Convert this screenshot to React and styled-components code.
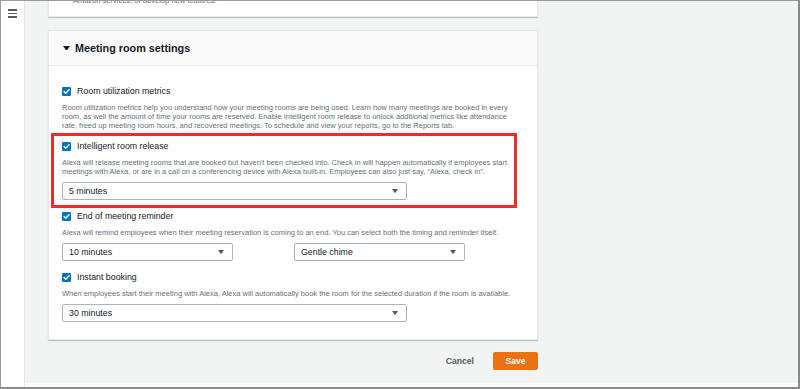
import React from 'react';
import styled, { createGlobalStyle } from 'styled-components';

const GlobalStyle = createGlobalStyle`
  html, body { margin: 0; padding: 0; }
  body {
    font-family: "Liberation Sans", Arial, sans-serif;
    color: #16191f;
    background: #ffffff;
  }
  * { box-sizing: border-box; }
`;

const Frame = styled.div`
  width: 800px;
  height: 389px;
  display: flex;
  background: #ffffff;
  border-top: 1px solid #9a9a9a;
  border-left: 1px solid #9a9a9a;
  border-right: 2px solid #8a8a8a;
  border-bottom: 2px solid #8a8a8a;
  overflow: hidden;
`;

const Sidebar = styled.div`
  width: 24px;
  flex: none;
  background: #ffffff;
  border-right: 1px solid #e4e7e7;
  padding: 8px 0 0 7px;
`;

const Burger = styled.div`
  width: 9px;
  display: flex;
  flex-direction: column;
  gap: 2px;
  span {
    display: block;
    height: 1.5px;
    background: #545b64;
  }
`;

const MainWrap = styled.div`
  flex: 1;
  display: flex;
  flex-direction: column;
`;

const Main = styled.main`
  flex: 1;
  background: #f2f3f3;
  padding: 0 0 0 23px;
  overflow: hidden;
`;

const BottomStrip = styled.div`
  height: 4px;
  background: #fbfbfb;
`;

const Column = styled.div`
  width: 490px;
  display: flex;
  flex-direction: column;
`;

const Card = styled.section`
  background: #ffffff;
  border: 1px solid #e6e9e9;
  box-shadow: 0 1px 1px rgba(0, 28, 36, 0.25);
  border-radius: 0 0 1px 1px;
`;

const TopCard = styled(Card)`
  margin-top: -6px;
  padding: 0 13px 11px 24px;
  font-size: 7.5px;
  line-height: 9px;
  color: #687078;
`;

const SettingsCard = styled(Card)`
  margin-top: 13px;
`;

const Header = styled.header`
  height: 35px;
  background: #fafafa;
  border-bottom: 1px solid #eaeded;
  display: flex;
  align-items: center;
  padding: 0 0 0 14px;
  gap: 5px;
  h2 {
    margin: 0;
    font-size: 10.8px;
    font-weight: 700;
    color: #16191f;
  }
`;

const Body = styled.div`
  padding: 19px 13px 17px 13px;
  display: flex;
  flex-direction: column;
  gap: 10px;
`;

const Setting = styled.div`
  display: flex;
  flex-direction: column;
`;

const Highlight = styled.div`
  border: 3px solid #e8302b;
  margin: -7px 7px -8px -11px;
  padding: 4px 0 5px 8px;
`;

const Row = styled.label`
  height: 12px;
  display: flex;
  align-items: center;
  gap: 6px;
  font-size: 8.8px;
  color: #16191f;
`;

const Desc = styled.p`
  margin: 6px 0 0 0;
  font-size: 7.5px;
  line-height: 9px;
  color: #687078;
  white-space: nowrap;
`;

const Selects = styled.div`
  display: flex;
  gap: 61px;
  margin-top: 6px;
`;

const Select = styled.div`
  width: ${p => p.$w}px;
  height: 18px;
  border: 1px solid #aab7b8;
  border-radius: 2px;
  background: #ffffff;
  display: flex;
  align-items: center;
  justify-content: space-between;
  padding: 0 8px 0 6px;
  font-size: 8.8px;
  color: #16191f;
`;

const Footer = styled.div`
  display: flex;
  justify-content: flex-end;
  align-items: center;
  gap: 10px;
  margin-top: 12px;
`;

const Button = styled.button`
  height: 18px;
  border: none;
  border-radius: 2px;
  font-family: inherit;
  font-size: 8.6px;
  font-weight: 700;
  padding: 0 ${p => (p.$primary ? 11 : 9)}px;
  background: ${p => (p.$primary ? '#ec7211' : 'transparent')};
  color: ${p => (p.$primary ? '#ffffff' : '#545b64')};
  min-width: ${p => (p.$primary ? 45 : 0)}px;
`;

const Check = () => (
  <svg width="9" height="9" viewBox="0 0 9 9">
    <rect x="0" y="0" width="9" height="9" rx="1.2" fill="#0073bb" />
    <path d="M2.1 4.6 L3.8 6.3 L7 2.7" fill="none" stroke="#fff" strokeWidth="1.4" strokeLinecap="round" strokeLinejoin="round" />
  </svg>
);

const Caret = ({ size = 6, color = '#545b64' }) => (
  <svg width={size} height={size * 0.7} viewBox="0 0 10 7">
    <path d="M0 0 L10 0 L5 7 Z" fill={color} />
  </svg>
);

const Dropdown = ({ w, value }) => (
  <Select $w={w}>
    <span>{value}</span>
    <Caret />
  </Select>
);

const CheckRow = ({ children }) => (
  <Row>
    <Check />
    <span>{children}</span>
  </Row>
);

export default function App() {
  return (
    <>
      <GlobalStyle />
      <Frame>
        <Sidebar>
          <Burger>
            <span />
            <span />
            <span />
          </Burger>
        </Sidebar>
        <MainWrap>
          <Main>
            <Column>
              <TopCard>Amazon services, or develop new features.</TopCard>

              <SettingsCard>
                <Header>
                  <Caret size={7} color="#16191f" />
                  <h2>Meeting room settings</h2>
                </Header>
                <Body>
                  <Setting>
                    <CheckRow>Room utilization metrics</CheckRow>
                    <Desc>
                      Room utilization metrics help you understand how your meeting rooms are being used. Learn how many meetings are booked in every
                      <br />
                      room, as well the amount of time your rooms are reserved. Enable Intelligent room release to unlock additional metrics like attendance
                      <br />
                      rate, freed up meeting room hours, and recovered meetings. To schedule and view your reports, go to the Reports tab.
                    </Desc>
                  </Setting>

                  <Highlight>
                    <Setting>
                      <CheckRow>Intelligent room release</CheckRow>
                      <Desc>
                        Alexa will release meeting rooms that are booked but haven't been checked into. Check in will happen automatically if employees start
                        <br />
                        meetings with Alexa, or are in a call on a conferencing device with Alexa built-in. Employees can also just say, “Alexa, check in”.
                      </Desc>
                      <Selects>
                        <Dropdown w={345} value="5 minutes" />
                      </Selects>
                    </Setting>
                  </Highlight>

                  <Setting>
                    <CheckRow>End of meeting reminder</CheckRow>
                    <Desc>
                      Alexa will remind employees when their meeting reservation is coming to an end. You can select both the timing and reminder itself.
                    </Desc>
                    <Selects>
                      <Dropdown w={171} value="10 minutes" />
                      <Dropdown w={171} value="Gentle chime" />
                    </Selects>
                  </Setting>

                  <Setting>
                    <CheckRow>Instant booking</CheckRow>
                    <Desc>
                      When employees start their meeting with Alexa, Alexa will automatically book the room for the selected duration if the room is available.
                    </Desc>
                    <Selects>
                      <Dropdown w={345} value="30 minutes" />
                    </Selects>
                  </Setting>
                </Body>
              </SettingsCard>

              <Footer>
                <Button>Cancel</Button>
                <Button $primary>Save</Button>
              </Footer>
            </Column>
          </Main>
          <BottomStrip />
        </MainWrap>
      </Frame>
    </>
  );
}
